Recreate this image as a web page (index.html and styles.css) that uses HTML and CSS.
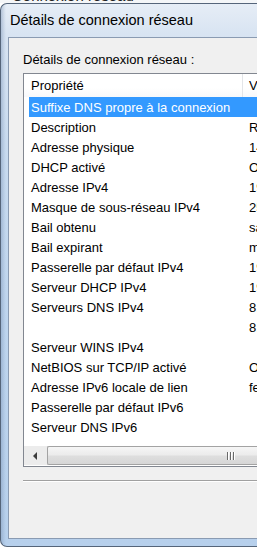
FILE: index.html
```html
<!DOCTYPE html>
<html lang="fr">
<head>
<meta charset="utf-8">
<title>Détails de connexion réseau</title>
<link rel="stylesheet" href="styles.css">
</head>
<body>
<div class="backdrop"><span class="backdrop-text">Connexion réseau</span></div>
<div class="window">
  <div class="titlebar">Détails de connexion réseau</div>
  <div class="client">
    <div class="label">Détails de connexion réseau :</div>
    <div class="listview">
      <div class="header">
        <div class="hcol hcol1">Propriété</div>
        <div class="hcol hcol2">Valeur</div>
      </div>
      <div class="rows">
        <div class="row selected"><span class="p">Suffixe DNS propre à la connexion</span><span class="v"></span></div>
        <div class="row"><span class="p">Description</span><span class="v">Realtek PCIe GBE Family Controller</span></div>
        <div class="row"><span class="p">Adresse physique</span><span class="v">14-DA-E9-3B-5C-21</span></div>
        <div class="row"><span class="p">DHCP activé</span><span class="v">Oui</span></div>
        <div class="row"><span class="p">Adresse IPv4</span><span class="v">192.168.1.12</span></div>
        <div class="row"><span class="p">Masque de sous-réseau IPv4</span><span class="v">255.255.255.0</span></div>
        <div class="row"><span class="p">Bail obtenu</span><span class="v">samedi 14 juin 2014 10:12:31</span></div>
        <div class="row"><span class="p">Bail expirant</span><span class="v">mardi 17 juin 2014 10:12:31</span></div>
        <div class="row"><span class="p">Passerelle par défaut IPv4</span><span class="v">192.168.1.1</span></div>
        <div class="row"><span class="p">Serveur DHCP IPv4</span><span class="v">192.168.1.1</span></div>
        <div class="row"><span class="p">Serveurs DNS IPv4</span><span class="v">8.8.8.8</span></div>
        <div class="row"><span class="p"></span><span class="v">8.8.4.4</span></div>
        <div class="row"><span class="p">Serveur WINS IPv4</span><span class="v"></span></div>
        <div class="row"><span class="p">NetBIOS sur TCP/IP activé</span><span class="v">Oui</span></div>
        <div class="row"><span class="p">Adresse IPv6 locale de lien</span><span class="v">fe80::a1b2:c3d4:e5f6:1234%11</span></div>
        <div class="row"><span class="p">Passerelle par défaut IPv6</span><span class="v"></span></div>
        <div class="row"><span class="p">Serveur DNS IPv6</span><span class="v"></span></div>
      </div>
      <div class="hscroll">
        <div class="arrow-btn"><span class="arrow-left"></span></div>
        <div class="thumb"><span class="grip"></span><span class="grip"></span><span class="grip"></span></div>
      </div>
    </div>
    <div class="sep"></div>
  </div>
</div>
</body>
</html>
```
FILE: styles.css
```css
html, body {
  margin: 0;
  padding: 0;
}
body {
  width: 257px;
  height: 548px;
  overflow: hidden;
  background: #ffffff;
  font-family: "Liberation Sans", Arial, sans-serif;
  font-size: 13px;
  color: #000;
}
.backdrop {
  height: 3px;
  overflow: hidden;
  background: #f4f6f8;
}
.backdrop-text {
  display: block;
  margin: -13px 0 0 12px;
  font-size: 15px;
  line-height: 17px;
  color: #222;
  white-space: nowrap;
}
.window {
  width: 420px;
  border: 1px solid #55657a;
  border-right: none;
  border-radius: 7px 0 0 7px;
  padding: 0 0 7px 7px;
  background:
    linear-gradient(to right, rgba(120, 145, 180, 0.45) 0, rgba(120, 145, 180, 0.15) 3px, rgba(255, 255, 255, 0) 5px),
    linear-gradient(to bottom, #e6edf6 0, #d8e4f2 30px, #c9dbef 140px, #bed5ee 320px, #b7d0ec 100%);
}
.titlebar {
  height: 33px;
  box-sizing: border-box;
  padding: 8px 0 0 2px;
  font-size: 14.5px;
  line-height: 16px;
  white-space: nowrap;
  color: #000;
}
.client {
  height: 502px;
  box-sizing: border-box;
  border: 1px solid #8a9bb2;
  border-right: none;
  background: #f0f0f0;
  padding: 14px 0 0 14px;
  display: flex;
  flex-direction: column;
}
.label {
  line-height: 15px;
  white-space: nowrap;
}
.listview {
  margin-top: 6px;
  height: 394px;
  box-sizing: border-box;
  border: 1px solid #828790;
  border-right: none;
  background: #fff;
  display: flex;
  flex-direction: column;
}
.header {
  height: 23px;
  display: flex;
  line-height: 23px;
  background: linear-gradient(to bottom, #ffffff 0, #ffffff 60%, #f7f8fa 100%);
  white-space: nowrap;
}
.hcol1 {
  width: 211px;
  padding-left: 7px;
  border-right: 1px solid #e3e5e8;
}
.hcol2 {
  padding-left: 6px;
}
.rows {
  flex: 1;
  display: flex;
  flex-direction: column;
  padding-left: 5px;
}
.row {
  height: 20px;
  box-sizing: border-box;
  padding-top: 1px;
  line-height: 19px;
  display: grid;
  grid-template-columns: 220px auto;
  white-space: nowrap;
}
.row .p {
  padding-left: 2px;
  overflow: hidden;
}
.row.selected {
  background: #3399ff;
  color: #fff;
}
.hscroll {
  height: 19px;
  margin-bottom: 1px;
  display: flex;
  background: #ececec;
}
.arrow-btn {
  width: 23px;
  display: flex;
  align-items: center;
  padding-left: 9px;
  box-sizing: border-box;
}
.arrow-left {
  width: 0;
  height: 0;
  border-top: 4px solid transparent;
  border-bottom: 4px solid transparent;
  border-right: 4px solid #3d3d3d;
}
.thumb {
  flex: 1;
  box-sizing: border-box;
  border: 1px solid #a3a3a3;
  border-right: none;
  border-radius: 2px 0 0 2px;
  background: linear-gradient(to bottom, #f6f6f6 0, #ececec 45%, #dedede 55%, #d6d6d6 100%);
  display: flex;
  align-items: center;
  padding-left: 179px;
  gap: 2px;
}
.grip {
  width: 1px;
  height: 8px;
  background: #6a6a6a;
  box-shadow: 1px 0 0 #ffffff;
}
.sep {
  margin-top: 13px;
  height: 1px;
  background: #a0a0a0;
  border-bottom: 1px solid #ffffff;
}
```
